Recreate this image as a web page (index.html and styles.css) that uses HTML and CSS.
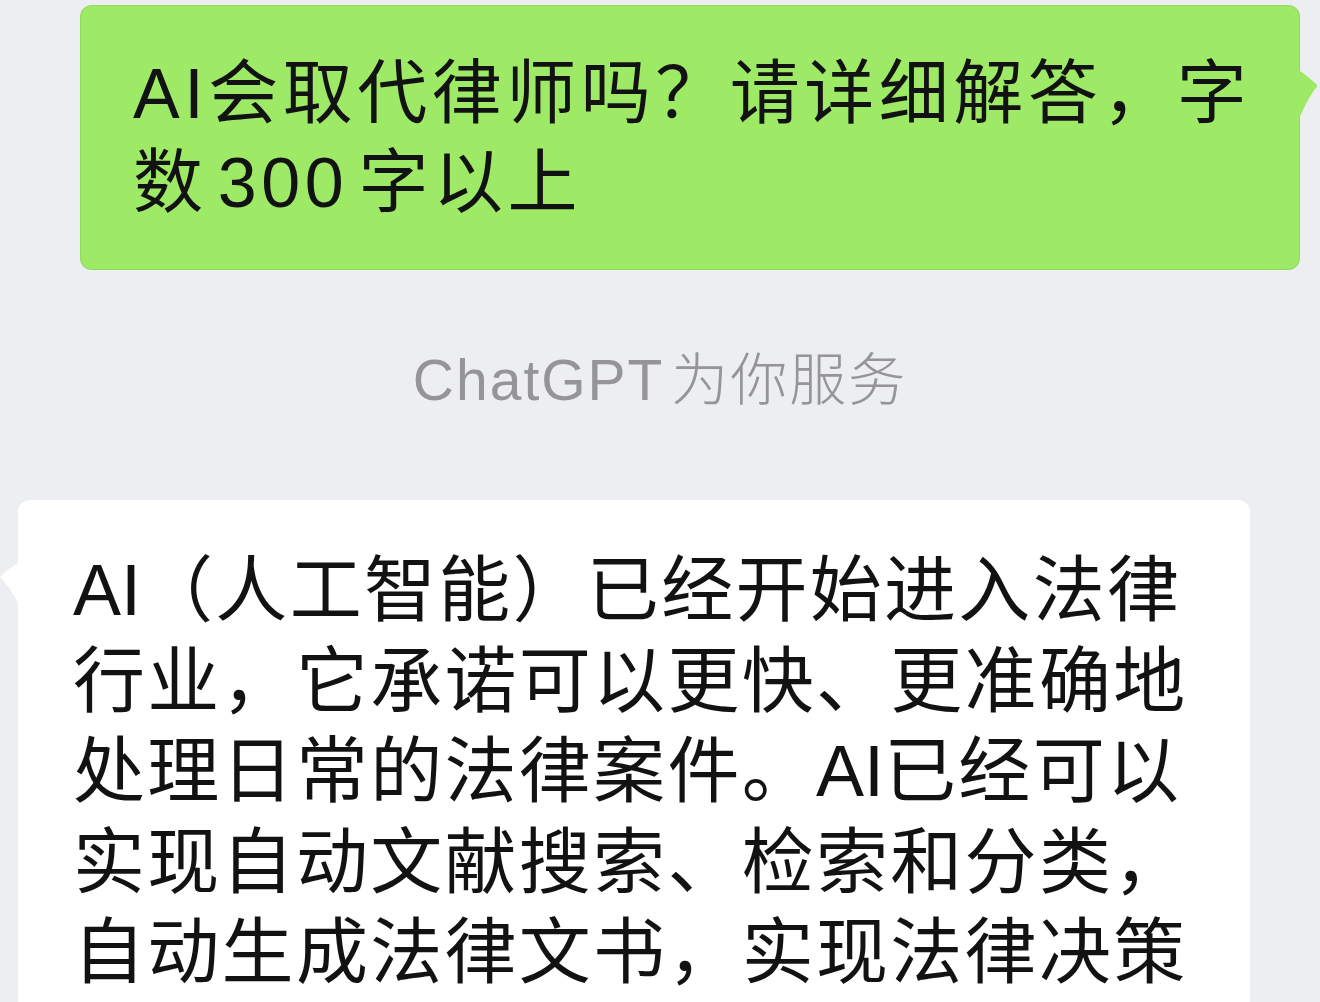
FILE: index.html
```html
<!DOCTYPE html>
<html lang="zh-CN">
<head>
<meta charset="utf-8">
<title>ChatGPT</title>
<link rel="stylesheet" href="styles.css">
</head>
<body>
<main class="chat">
  <div class="row row-me">
    <div class="bubble bubble-me">
      <p class="msg msg-me">AI会取代律师吗？请详细解答，字<br>数&#8202;300&#8202;字以上</p>
      <svg class="tail tail-right" width="20" height="46" viewBox="0 0 20 46" aria-hidden="true">
        <path d="M0 0 H1 C7 4 14 10 17.5 13.5 Q19 15 17.5 16.5 C12.5 22 6 34 1 46 H0 Z" fill="#9eea66"/>
      </svg>
    </div>
  </div>
  <div class="system">ChatGPT&#8202;为你服务</div>
  <div class="row row-bot">
    <div class="bubble bubble-bot">
      <p class="msg msg-bot"><span class="lat">AI</span>（人工智能）已经开始进入法律<br>行业，它承诺可以更快、更准确地<br>处理日常的法律案件。<span class="lat">AI</span>已经可以<br>实现自动文献搜索、检索和分类，<br>自动生成法律文书，实现法律决策</p>
      <svg class="tail tail-left" width="20" height="40" viewBox="0 0 20 40" aria-hidden="true">
        <path d="M20 0 H19 C13 4 6 9 2.5 12.5 Q1 14 2.5 15.5 C7.5 21 14 30 19 40 H20 Z" fill="#ffffff"/>
      </svg>
    </div>
  </div>
</main>
</body>
</html>
```
FILE: styles.css
```css
html, body {
  margin: 0;
  padding: 0;
}
body {
  width: 1320px;
  height: 1002px;
  overflow: hidden;
  background: #eceef1;
  font-family: "Liberation Sans", "Noto Sans CJK SC", sans-serif;
  color: #121212;
}
.chat {
  display: flex;
  flex-direction: column;
  padding-top: 5px;
}
.row {
  display: flex;
}
.row-me {
  justify-content: flex-end;
  padding-right: 20px;
}
.row-bot {
  justify-content: flex-start;
  padding-left: 18px;
  margin-top: 80px;
}
.bubble {
  position: relative;
  border-radius: 12px;
  box-sizing: border-box;
}
.bubble-me {
  width: 1220px;
  background: #9eea66;
  padding: 45px 20px 42px 53px;
  box-shadow: inset 0 0 0 1px rgba(120, 190, 80, 0.35);
}
.bubble-bot {
  width: 1232px;
  background: #ffffff;
  padding: 45px 30px 40px 55px;
}
.msg {
  margin: 0;
  white-space: nowrap;
}
.msg-me {
  font-size: 70px;
  line-height: 89px;
  letter-spacing: 4.5px;
}
.msg-bot {
  font-size: 72px;
  line-height: 90.5px;
  letter-spacing: 2.3px;
}
.lat {
  letter-spacing: 0;
}
.system {
  margin-top: 70px;
  text-align: center;
  font-size: 57px;
  line-height: 80px;
  letter-spacing: 2px;
  color: #959597;
  font-weight: 300;
}
.tail {
  position: absolute;
  display: block;
}
.tail-right {
  right: -19px;
  top: 66px;
}
.tail-left {
  left: -19px;
  top: 63px;
}
```
